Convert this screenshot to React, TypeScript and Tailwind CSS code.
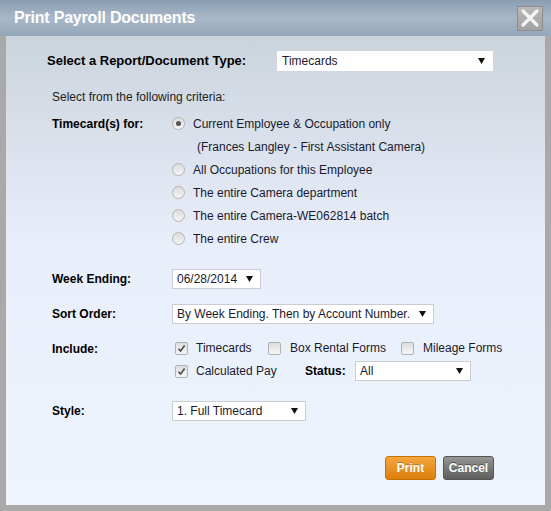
import React from 'react'

const font = { fontFamily: '"Liberation Sans", Arial, sans-serif' }

function Select({ value, className }: { value: string; className: string }) {
  return (
    <div
      className={`flex items-center justify-between bg-white border border-[#c9ccd1] h-[20px] pl-[4px] pr-[7px] text-[12px] text-[#1a1a2e] ${className}`}
    >
      <span>{value}</span>
      <svg width="7" height="6" viewBox="0 0 7 6">
        <path d="M0 0 H7 L3.5 6 Z" fill="#111" />
      </svg>
    </div>
  )
}

function Radio({ checked }: { checked?: boolean }) {
  return (
    <span className="w-[13px] h-[13px] rounded-full border border-[#b4b4b4] bg-gradient-to-b from-[#dcdcdc] to-[#f4f4f4] flex items-center justify-center shrink-0">
      {checked && <span className="w-[5px] h-[5px] rounded-full bg-[#555]" />}
    </span>
  )
}

function Check({ checked }: { checked?: boolean }) {
  return (
    <span className="w-[13px] h-[13px] rounded-[2px] border border-[#b0b0b0] bg-gradient-to-b from-[#dedede] to-[#f6f6f6] flex items-center justify-center shrink-0">
      {checked && (
        <svg width="9" height="9" viewBox="0 0 9 9">
          <path d="M1.5 4.8 L3.6 7 L7.6 1.6" fill="none" stroke="#4a4a4a" strokeWidth="1.6" />
        </svg>
      )}
    </span>
  )
}

const radios = [
  'All Occupations for this Employee',
  'The entire Camera department',
  'The entire Camera-WE062814 batch',
  'The entire Crew',
]

export default function App() {
  return (
    <div className="w-[551px] h-[511px] bg-[#a9a9a9] flex flex-col overflow-hidden" style={font}>
      <div className="h-[36px] shrink-0 bg-gradient-to-b from-[#8a9db1] via-[#a9b8c8] to-[#93a6ba] flex items-center justify-between pl-[14px] pr-[8px]">
        <span className="text-white font-bold text-[16px] tracking-[-0.2px]">Print Payroll Documents</span>
        <span className="w-[26px] h-[25px] border border-[#8d8d8d] bg-gradient-to-b from-[#b9b9b9] to-[#a2a2a2] flex items-center justify-center">
          <svg width="20" height="20" viewBox="0 0 20 20">
            <path d="M3 3 L17 17 M17 3 L3 17" stroke="#f4f4f4" strokeWidth="3.2" strokeLinecap="round" />
          </svg>
        </span>
      </div>

      <div className="flex-1 mx-[6px] mb-[6px] bg-gradient-to-b from-[#cbd3dd] via-[#e9effa] via-45% to-[#eef4fe] text-[12px] text-[#1a1a2e]">
        <div className="flex items-center pl-[41px] pt-[15px]">
          <span className="font-bold text-[13px] text-black w-[230px]">Select a Report/Document Type:</span>
          <Select value="Timecards" className="w-[216px] border-white" />
        </div>

        <div className="pl-[46px] pt-[17px] text-[#222]">Select from the following criteria:</div>

        <div className="flex pl-[46px] pt-[6px]">
          <span className="font-bold text-black w-[120px] h-[23px] flex items-center">Timecard(s) for:</span>
          <div className="flex flex-col">
            <div className="flex items-center gap-[8px] h-[23px]">
              <Radio checked />
              <span>Current Employee &amp; Occupation only</span>
            </div>
            <div className="pl-[25px] h-[23px] flex items-center">(Frances Langley - First Assistant Camera)</div>
            {radios.map((r) => (
              <div key={r} className="flex items-center gap-[8px] h-[23px]">
                <Radio />
                <span>{r}</span>
              </div>
            ))}
          </div>
        </div>

        <div className="flex items-center pl-[46px] pt-[19px]">
          <span className="font-bold text-black w-[120px]">Week Ending:</span>
          <Select value="06/28/2014" className="w-[89px]" />
        </div>

        <div className="flex items-center pl-[46px] pt-[15px]">
          <span className="font-bold text-black w-[120px]">Sort Order:</span>
          <Select value="By Week Ending. Then by Account Number." className="w-[262px]" />
        </div>

        <div className="flex pl-[46px] pt-[16px]">
          <span className="font-bold text-black w-[123px]">Include:</span>
          <div className="flex flex-col">
            <div className="flex items-center h-[16px]">
              <Check checked />
              <span className="ml-[8px] w-[72px]">Timecards</span>
              <Check />
              <span className="ml-[9px] w-[111px]">Box Rental Forms</span>
              <Check />
              <span className="ml-[9px]">Mileage Forms</span>
            </div>
            <div className="flex items-center h-[20px] mt-[5px]">
              <Check checked />
              <span className="ml-[8px] w-[109px]">Calculated Pay</span>
              <span className="font-bold text-black w-[50px]">Status:</span>
              <Select value="All" className="w-[116px]" />
            </div>
          </div>
        </div>

        <div className="flex items-center pl-[46px] pt-[20px]">
          <span className="font-bold text-black w-[120px]">Style:</span>
          <Select value="1. Full Timecard" className="w-[134px]" />
        </div>

        <div className="flex justify-end gap-[7px] pr-[51px] pt-[35px]">
          <button className="w-[51px] h-[24px] rounded-[3px] border border-[#c47204] bg-gradient-to-b from-[#f4a73a] to-[#dd7e06] text-white font-bold text-[12px] [text-shadow:0_-1px_0_rgba(0,0,0,0.25)]">
            Print
          </button>
          <button className="w-[51px] h-[24px] rounded-[3px] border border-[#555] bg-gradient-to-b from-[#959595] to-[#5e5e5e] text-white font-bold text-[12px] [text-shadow:0_-1px_0_rgba(0,0,0,0.4)]">
            Cancel
          </button>
        </div>
      </div>
    </div>
  )
}
